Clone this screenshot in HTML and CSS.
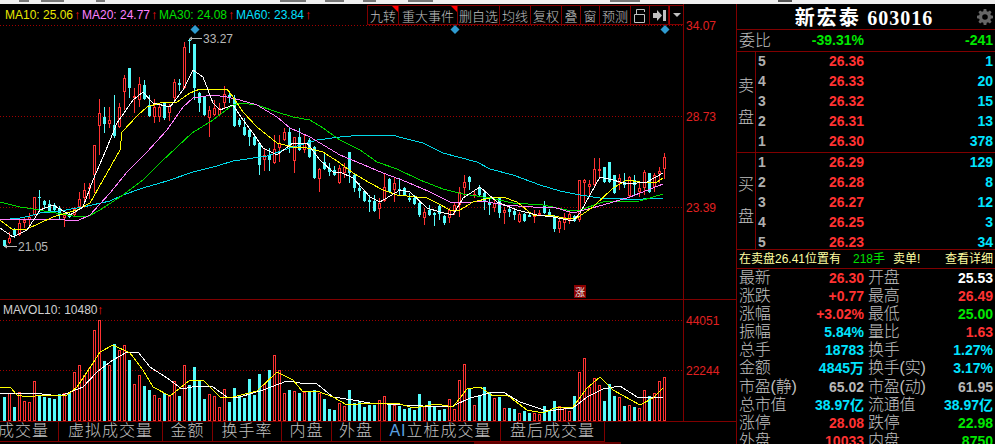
FILE: index.html
```html
<!DOCTYPE html>
<html>
<head>
    <title>新宏泰 603016</title>
    <link rel="stylesheet" href="styles.css">
</head>
<body>
    <div class="top-strip"></div>
    <div class="main">
        <div class="left">
            <div class="chart-head">
                <div class="legend">
                    <span class="c-yellow">MA10: 25.06<i>↑</i></span>
                    <span class="c-pink">MA20: 24.77<i>↑</i></span>
                    <span class="c-green">MA30: 24.08<i>↑</i></span>
                    <span class="c-cyan">MA60: 23.84<i>↑</i></span>
                </div>
                <div class="toolbar">
                    <span class="tool flagged">九转</span>
                    <span class="tool flagged">重大事件</span>
                    <span class="tool">删自选</span>
                    <span class="tool">均线</span>
                    <span class="tool">复权</span>
                    <span class="tool">叠</span>
                    <span class="tool">窗</span>
                    <span class="tool">预测</span>
                    <span class="tool icon">
                        <svg width="12" height="15" viewBox="0 0 12 15"><path d="M2.500 6V1.500h8V4M.5 6.500h10v8H.5z" fill="none" stroke="#c0c0c0" stroke-width="1"/></svg>
                    </span>
                    <span class="tool icon">
                        <svg width="13" height="11" viewBox="0 0 13 11"><path d="M0 3h4V0l5 5.500-5 5.500V8H0z M10 0h3v11h-3z" fill="#c0c0c0"/></svg>
                    </span>
                    <span class="tool drop"><b></b></span>
                </div>
            </div>
            <svg id="chart" class="chart" width="736" height="397" viewBox="0 25 736 397"></svg>
            <div class="tabs">
                <span class="tab first">成交量</span>
                <span class="tab">虚拟成交量</span>
                <span class="tab">金额</span>
                <span class="tab">换手率</span>
                <span class="tab">内盘</span>
                <span class="tab">外盘</span>
                <span class="tab"><em>AI</em>立桩成交量</span>
                <span class="tab">盘后成交量</span>
            </div>
            <div class="tabs-foot"></div>
        </div>

        <div class="panel">
            <div class="title">
                <span class="title-name">新宏泰 <b>603016</b></span>
                <svg class="gear" width="16" height="16" viewBox="0 0 16 16">
                    <path fill="#666" fill-rule="evenodd" d="M6.700 0h2.600l.4 2.200 1.300.6L12.900 1.500l1.700 1.700-1.300 1.900.5 1.200 2.200.4v2.600l-2.200.4-.5 1.200 1.300 1.900-1.700 1.700-1.900-1.300-1.300.5-.4 2.300H6.700l-.4-2.300-1.300-.5-1.900 1.300-1.700-1.700 1.300-1.900-.5-1.200L0 9.300V6.700l2.200-.4.500-1.200-1.300-1.900 1.700-1.700 1.900 1.300 1.300-.6zM8 5.200a2.800 2.800 0 1 0 0 5.600 2.800 2.800 0 0 0 0-5.600z"/>
                </svg>
            </div>
            <div class="ratio">
                <span class="name">委比</span>
                <span class="val1 c-lime">-39.31%</span>
                <span class="val2 c-lime">-241</span>
            </div>
            <div class="book">
                <div class="side">卖<br>盘</div>
                <div class="levels">
                    <div class="level"><span class="no">5</span><span class="price">26.36</span><span class="qty">1</span></div>
                    <div class="level"><span class="no">4</span><span class="price">26.33</span><span class="qty">20</span></div>
                    <div class="level"><span class="no">3</span><span class="price">26.32</span><span class="qty">15</span></div>
                    <div class="level"><span class="no">2</span><span class="price">26.31</span><span class="qty">13</span></div>
                    <div class="level"><span class="no">1</span><span class="price">26.30</span><span class="qty">378</span></div>
                </div>
            </div>
            <div class="book buy">
                <div class="side">买<br>盘</div>
                <div class="levels">
                    <div class="level"><span class="no">1</span><span class="price">26.29</span><span class="qty">129</span></div>
                    <div class="level"><span class="no">2</span><span class="price">26.28</span><span class="qty">8</span></div>
                    <div class="level"><span class="no">3</span><span class="price">26.27</span><span class="qty">12</span></div>
                    <div class="level"><span class="no">4</span><span class="price">26.25</span><span class="qty">3</span></div>
                    <div class="level"><span class="no">5</span><span class="price">26.23</span><span class="qty">34</span></div>
                </div>
            </div>
            <div class="notice">
                <span class="notice-a">在卖盘26.41位置有</span>
                <span class="notice-b">218手</span>
                <span class="notice-c">卖单!</span>
                <span class="notice-d">查看详细</span>
            </div>
            <div class="stats">
                <span class="k">最新</span><span class="v c-red">26.30</span><span class="k">开盘</span><span class="v c-white">25.53</span>
                <span class="k">涨跌</span><span class="v c-red">+0.77</span><span class="k">最高</span><span class="v c-red">26.49</span>
                <span class="k">涨幅</span><span class="v c-red">+3.02%</span><span class="k">最低</span><span class="v c-lime">25.00</span>
                <span class="k">振幅</span><span class="v c-qty">5.84%</span><span class="k">量比</span><span class="v c-red">1.63</span>
                <span class="k">总手</span><span class="v c-qty">18783</span><span class="k">换手</span><span class="v c-qty">1.27%</span>
                <span class="k">金额</span><span class="v c-qty">4845万</span><span class="k">换手(实)</span><span class="v c-qty">3.17%</span>
                <span class="k">市盈(静)</span><span class="v c-gray">65.02</span><span class="k">市盈(动)</span><span class="v c-gray">61.95</span>
                <span class="k">总市值</span><span class="v c-qty">38.97亿</span><span class="k">流通值</span><span class="v c-qty">38.97亿</span>
                <span class="k">涨停</span><span class="v c-red">28.08</span><span class="k">跌停</span><span class="v c-lime">22.98</span>
                <span class="k">外盘</span><span class="v c-red">10033</span><span class="k">内盘</span><span class="v c-lime">8750</span>
            </div>
        </div>
    </div>
    <script src="script.js"></script>
</body>
</html>
```

FILE: styles.css
```css
html, body {
    margin: 0;
    height: 444px;
    overflow: hidden;
    background-color: #000;
}
body {
    font-family: "Liberation Sans", "Noto Sans CJK SC", sans-serif;
    color: #c0c0c0;
}

/* bottom edge of the window toolbar above the quote view */
.top-strip {
    height: 4px;
    background-color: #efefef;
    background-image:
        linear-gradient(90deg,
            transparent 19px, #777 19px, #777 29px, transparent 29px,
            transparent 41px, #777 41px, #777 64px, transparent 64px,
            transparent 96px, #777 96px, #777 105px, transparent 105px,
            transparent 280px, #777 280px, #777 306px, transparent 306px,
            transparent 325px, #777 325px, #777 344px, transparent 344px,
            transparent 363px, #777 363px, #777 376px, transparent 376px,
            transparent 408px, #777 408px, #777 433px, transparent 433px,
            transparent 610px, #777 610px, #777 640px, transparent 640px,
            transparent 778px, #555 778px, #555 792px, transparent 792px);
    background-size: 100% 2px;
    background-repeat: no-repeat;
}
.main {
    display: flex;
    height: 440px;
}
.left {
    width: 736px;
    flex: none;
}

/* header row above the kline area */
.chart-head {
    display: flex;
    height: 21px;
    width: 684px;
    box-sizing: border-box;
    border-right: 1px solid #800000;
    justify-content: space-between;
}
.legend {
    display: flex;
    font-size: 12px;
    line-height: 22px;
    padding-left: 5px;
}
.legend span {
    width: 77px;
    white-space: nowrap;
}
.legend i {
    font-style: normal;
    color: #f01010;
    font-size: 13px;
    margin-left: 1px;
}
.c-yellow { color: #e8e800; }
.c-pink { color: #ff80ff; }
.c-green { color: #00e000; }
.c-cyan { color: #00e0ff; }
.toolbar {
    display: flex;
    box-sizing: border-box;
    height: 20px;
    margin-top: 1px;
    border-left: 1px solid #800000;
    border-top: 1px solid #800000;
    border-bottom: 1px solid #800000;
}
.tool {
    position: relative;
    box-sizing: border-box;
    display: flex;
    align-items: center;
    justify-content: center;
    font-size: 13px;
    font-weight: 300;
    border-right: 1px solid #800000;
    white-space: nowrap;
}
.tool:nth-child(1) { width: 31px; }
.tool:nth-child(2) { width: 59px; }
.tool:nth-child(3) { width: 42px; }
.tool:nth-child(4), .tool:nth-child(5) { width: 31px; }
.tool:nth-child(6), .tool:nth-child(7) { width: 19px; }
.tool:nth-child(8) { width: 31px; }
.tool:nth-child(9), .tool:nth-child(10) { width: 19px; }
.tool:nth-child(11) { width: 14px; border-right: none; border-left: 1px solid #a00000; }
.flagged::after {
    content: "";
    position: absolute;
    top: 0;
    right: 0;
    border-top: 6px solid #ff0000;
    border-left: 6px solid transparent;
}
.drop b {
    display: block;
    border-top: 4px solid #c0c0c0;
    border-left: 4px solid transparent;
    border-right: 4px solid transparent;
}
.chart {
    display: block;
    overflow: visible;
}

/* indicator switch tabs */
.tabs {
    display: flex;
    height: 20px;
    box-sizing: border-box;
    border-top: 1px solid #800000;
    margin-top: -1px;
}
.tab {
    flex: none;
    box-sizing: border-box;
    width: 50px;
    height: 20px;
    border-right: 1px solid #800000;
    border-bottom: 1px solid #800000;
    font-size: 16px;
    font-weight: 300;
    letter-spacing: 1px;
    line-height: 18px;
    text-align: center;
    white-space: nowrap;
}
.tab.first {
    width: 59px;
    margin-left: 0;
    text-align: left;
    text-indent: -2px;
    overflow: hidden;
}
.tab:nth-child(2), .tab:nth-child(8) { width: 104px; }
.tab:nth-child(4) { width: 69px; }
.tab:nth-child(6) { width: 49px; }
.tab:nth-child(7) { width: 120px; }
.tab em {
    font-style: normal;
    color: #5aa0e0;
}
.tabs-foot {
    width: 147px;
    height: 2px;
    margin: 1px 0 0 474px;
    background-color: #600000;
}

/* right hand quote panel */
.panel {
    width: 259px;
    flex: none;
    box-sizing: border-box;
    border-left: 1px solid #800000;
}
.title {
    margin-left: -1px;
    height: 25px;
    color: #fff;
    position: relative;
    display: flex;
    justify-content: center;
    align-items: center;
}
.title-name {
    font-family: "Noto Sans CJK SC", sans-serif;
    font-weight: 700;
    font-size: 20px;
    letter-spacing: 2px;
    margin-right: 3px;
}
.title-name b {
    font-family: "Liberation Serif", serif;
    letter-spacing: 1px;
}
.gear {
    position: absolute;
    right: 2px;
    top: 5px;
}
.ratio {
    display: grid;
    grid-template-columns: 36px 91px 1fr;
    height: 21px;
    line-height: 21px;
    border-top: 1px solid #800000;
    border-bottom: 1px solid #800000;
    align-items: center;
}
.ratio .name {
    padding-left: 2px;
    font-size: 16px;
    font-weight: 300;
}
.val1, .val2, .price, .qty, .no, .v {
    font-weight: 700;
    font-size: 14px;
}
.val1 { text-align: right; }
.val2 { text-align: right; padding-right: 2px; }
.book {
    display: flex;
    height: 100px;
}
.book.buy {
    border-top: 1px solid #800000;
    height: 96px;
}
.side {
    width: 17px;
    flex: none;
    border-right: 1px solid #800000;
    font-size: 16px;
    font-weight: 300;
    line-height: 32px;
    padding-left: 1px;
    box-sizing: content-box;
    margin-right: -1px;
    display: flex;
    align-items: center;
}
.levels {
    flex: 1;
    margin-top: -1px;
}
.level {
    display: grid;
    grid-template-columns: 16px 90px 1fr;
    height: 20px;
    line-height: 20px;
    padding-left: 3px;
}
.no { color: #b0b0b0; }
.price { color: #ff3232; text-align: right; }
.qty { color: #00e4ff; text-align: right; padding-right: 2px; }
.notice {
    display: flex;
    height: 18px;
    line-height: 18px;
    border-top: 1px solid #800000;
    border-bottom: 1px solid #800000;
    font-size: 12px;
    color: #ffffa0;
    white-space: nowrap;
}
.notice-a { margin-left: 2px; width: 114px; }
.notice-b { color: #00e000; width: 40px; }
.notice-c { width: 52px; }
.stats {
    display: grid;
    grid-template-columns: 34px 93px 36px 1fr;
    grid-auto-rows: 18.100px;
    line-height: 18.100px;
    white-space: nowrap;
}
.k {
    font-size: 16px;
    font-weight: 300;
    padding-left: 2px;
    letter-spacing: -.2px;
}
.k:nth-child(4n+3) {
    padding-left: 4px;
}
.v {
    text-align: right;
}
.v:nth-child(4n) {
    padding-right: 2px;
}
.c-red { color: #ff3232; }
.c-lime { color: #00e800; }
.c-qty { color: #00e4ff; }
.c-gray { color: #b8b8b8; }
.c-white { color: #fff; }
```

FILE: script.js
```js
// k line chart: [high, bodyTop, bodyBottom, low, up] in screen y, one row per trading day
const RED = "#ff3232", CYAN = "#54fcfc", GRID = "#800000";

const candles = [
    [240,240,246,247,0],[232,238,243,244,1],[228,230,235,238,0],[218,223,235,236,1],[217,220,223,228,1],
    [213,217,220,227,1],[197,197,215,216,1],[190,197,198,210,0],[200,201,205,208,0],[200,204,212,213,0],
    [203,205,210,211,0],[206,208,215,219,0],[213,215,218,227,1],[212,214,217,218,0],[207,209,215,216,1],
    [192,199,207,208,1],[183,190,198,202,1],[183,187,188,199,1],[145,145,175,193,1],[99,113,126,155,1],
    [107,117,124,133,0],[107,120,124,128,1],[95,125,136,138,0],[103,107,127,128,1],[75,78,92,110,1],
    [68,68,88,98,0],[88,96,98,113,1],[77,84,100,107,1],[80,85,99,100,0],[95,105,116,117,0],
    [99,107,117,123,1],[103,107,117,122,1],[102,103,118,120,0],[104,106,113,121,1],[79,82,98,103,1],
    [79,83,85,91,0],[42,47,88,89,1],[40,40,41,53,0],[44,44,88,100,0],[92,93,103,112,0],
    [96,97,115,116,0],[106,110,118,137,1],[100,108,115,116,1],[103,108,115,116,1],[86,94,103,108,1],
    [93,95,97,103,0],[95,98,126,127,0],[118,120,125,127,0],[118,127,135,136,0],[129,130,137,146,0],
    [136,137,145,146,0],[143,143,165,175,0],[148,155,160,171,1],[148,155,160,171,0],[135,149,163,164,1],
    [135,143,148,162,1],[128,132,140,141,1],[128,132,147,153,0],[137,137,161,173,1],[128,137,150,151,0],
    [135,143,150,153,1],[138,140,157,158,0],[146,147,178,179,0],[168,169,179,192,1],[152,162,169,170,0],
    [163,168,172,176,0],[166,170,175,176,0],[165,168,183,184,1],[163,167,173,178,1],[152,152,173,183,0],
    [174,175,188,192,0],[183,188,191,198,0],[190,191,201,202,0],[195,200,202,212,0],[195,201,211,212,0],
    [198,203,209,219,1],[173,187,201,202,1],[178,179,192,193,0],[178,183,190,202,1],[178,189,191,196,0],
    [187,188,195,196,0],[193,198,200,202,0],[195,198,204,205,0],[202,203,215,217,0],[208,212,218,225,1],
    [205,210,215,216,0],[212,213,215,226,0],[205,206,214,220,0],[215,216,223,225,0],[208,210,218,223,1],
    [202,205,212,215,1],[187,192,205,217,1],[175,182,188,198,1],[176,177,182,190,0],[190,194,196,198,1],
    [185,187,195,196,0],[192,193,202,210,0],[198,202,205,215,0],[197,203,208,212,1],[197,198,213,218,0],
    [207,210,213,224,1],[206,209,212,217,0],[208,211,215,220,0],[212,214,222,223,1],[213,214,221,222,0],
    [213,215,217,217,0],[210,215,217,223,1],[210,213,215,216,1],[201,206,213,214,0],[209,212,215,216,0],
    [215,216,229,232,0],[218,221,229,233,1],[213,217,223,230,1],[212,214,220,224,1],[215,216,221,222,0],
    [180,180,220,222,1],[179,180,183,203,1],[180,184,187,197,1],[158,169,185,186,1],[158,169,171,178,1],
    [167,167,182,183,0],[162,162,182,183,0],[175,175,193,194,0],[174,178,183,190,1],[173,182,185,188,0],
    [176,177,196,197,1],[175,180,185,195,0],[183,188,192,197,1],[170,172,188,195,1],[173,173,192,193,0],
    [173,175,187,192,1],[167,171,174,183,1],[153,157,169,179,1]
];

// volume bars: [top, up], top is three times the distance below y 290
const vols = [
    [320,0],[310,1],[350,0],[305,1],[333,1],[336,1],[273,1],[315,0],[320,0],[323,0],[327,0],[312,0],[310,1],[306,0],
    [246,1],[226,1],[255,1],[234,1],[120,1],[90,1],[213,0],[225,1],[162,0],[180,1],[165,1],[210,0],[282,1],[255,1],
    [288,0],[300,0],[315,1],[325,1],[310,0],[318,1],[273,1],[318,0],[226,1],[285,0],[231,0],[270,0],[327,0],[312,1],
    [318,1],[351,1],[297,1],[336,0],[294,0],[318,0],[323,0],[267,0],[315,0],[252,0],[282,1],[240,0],[195,1],[240,1],
    [309,1],[300,0],[303,1],[309,0],[305,1],[305,0],[300,0],[308,1],[327,0],[357,0],[360,0],[340,1],[347,1],[300,0],
    [339,0],[333,0],[351,0],[345,0],[345,0],[330,1],[318,1],[338,0],[345,1],[348,0],[357,0],[353,0],[360,0],[312,0],
    [347,1],[333,0],[351,0],[360,0],[357,0],[327,1],[357,1],[270,1],[222,1],[294,0],[345,1],[315,0],[291,0],[306,0],
    [324,1],[321,0],[354,1],[354,0],[357,0],[369,1],[363,0],[369,0],[369,1],[372,1],[348,0],[363,0],[333,0],[348,1],
    [354,1],[363,1],[318,0],[246,1],[204,1],[291,1],[264,1],[285,1],[333,0],[282,0],[318,0],[321,1],[348,0],[345,1],
    [351,0],[354,1],[300,1],[318,0],[309,1],[273,1],[261,1]
];

const lines = {
    "#00d8e8": [[0,220],[10,219],[20,218],[30,216],[40,213],[60,211],[83,207],[110,201],[123,195],[143,188],[167,181],[193,172],[217,166],[233,161],[267,156],[290,148],[317,140],[340,137],[362,135],[392,135],[403,138],[423,143],[443,153],[477,162],[490,169],[513,175],[540,185],[560,191],[580,195],[600,198],[623,199],[643,199],[663,198]],
    "#00d800": [[0,202],[20,207],[33,209],[50,212],[73,216],[87,217],[100,210],[123,195],[143,180],[160,163],[177,147],[192,133],[213,120],[233,105],[240,103],[257,105],[277,112],[293,117],[310,120],[323,128],[340,140],[360,150],[377,162],[397,169],[420,180],[443,189],[463,194],[490,198],[513,203],[543,205],[567,210],[580,210],[603,202],[640,201],[663,194]],
    "#ff80ff": [[0,220],[20,219],[53,219],[77,221],[90,215],[110,193],[127,172],[147,152],[167,130],[183,107],[193,98],[213,95],[227,97],[240,100],[257,105],[277,117],[290,128],[310,137],[340,155],[357,162],[383,173],[407,182],[430,192],[450,202],[463,203],[483,201],[503,205],[533,207],[553,207],[573,213],[603,205],[630,197],[663,184]],
    "#ffff00": [[0,220],[13,230],[27,229],[53,217],[77,210],[90,203],[107,173],[120,150],[122,132],[138,115],[147,107],[160,103],[177,102],[190,93],[200,89],[227,89],[233,97],[243,112],[257,127],[277,143],[293,147],[307,148],[323,152],[340,163],[353,173],[370,183],[383,190],[397,195],[427,198],[437,203],[450,210],[460,210],[473,202],[490,198],[503,197],[517,202],[533,215],[550,215],[563,218],[577,218],[593,207],[613,188],[627,180],[640,182],[657,182],[663,178]],
    "#ffffff": [[0,228],[13,237],[27,230],[40,210],[53,205],[70,215],[83,207],[93,180],[106,150],[117,123],[133,100],[143,92],[153,103],[170,107],[183,90],[193,70],[203,77],[213,103],[220,110],[233,105],[243,120],[253,133],[263,148],[277,155],[293,143],[307,143],[320,160],[333,172],[340,172],[353,178],[370,197],[380,202],[400,190],[410,192],[427,208],[440,212],[453,215],[463,198],[480,187],[497,202],[517,210],[537,215],[553,217],[573,221],[580,213],[600,177],[613,180],[627,184],[647,182],[663,173]]
};

const volLines = {
    "#ffffff": [[0,393],[33,393],[60,396],[83,387],[97,372],[113,360],[127,352],[138,352],[150,367],[167,378],[182,389],[197,386],[213,387],[227,397],[240,397],[263,390],[287,381],[300,383],[317,384],[333,397],[353,400],[370,403],[403,405],[423,406],[453,406],[470,398],[490,393],[503,392],[520,402],[547,411],[573,408],[587,397],[603,389],[620,386],[637,397],[663,397]],
    "#ffff00": [[0,388],[10,387],[17,395],[27,397],[43,395],[67,395],[77,387],[93,363],[100,352],[113,345],[130,353],[143,370],[153,387],[170,396],[190,380],[203,380],[220,397],[233,397],[257,391],[277,372],[293,380],[303,392],[317,391],[333,397],[347,405],[370,403],[397,403],[413,408],[437,404],[453,407],[467,389],[480,387],[493,396],[507,395],[527,410],[543,413],[557,407],[573,407],[587,388],[600,377],[613,390],[640,405],[653,398],[663,388]]
};

const svg = document.getElementById("chart");
const NS = "http://www.w3.org/2000/svg";

function add(name, attrs, text) {
    const el = document.createElementNS(NS, name);
    for (const key in attrs) el.setAttribute(key, attrs[key]);
    if (text) el.textContent = text;
    svg.appendChild(el);
    return el;
}

function crisp(x1, y1, x2, y2, stroke, extra) {
    return add("line", Object.assign({ x1, y1, x2, y2, stroke, "shape-rendering": "crispEdges" }, extra));
}

function poly(points, stroke) {
    add("polyline", {
        points: points.map(p => p.join(",")).join(" "),
        fill: "none",
        stroke,
        "shape-rendering": "crispEdges"
    });
}

// grid lines
const dots = { "stroke-dasharray": "1 2" };
[25.5, 116.5, 207.5, 320.5, 370.5].forEach(y => crisp(0, y, 683, y, "#a00000", dots));
crisp(0, 299.5, 736, 299.5, GRID);
crisp(683.5, 25, 683.5, 421, GRID);

// axis labels
[[34.07, 30], [28.73, 120.5], [23.39, 211.5]].forEach(([v, y]) => {
    add("text", { x: 686, y, fill: "#e02020", "font-size": 12 }, v.toFixed(2));
});
[[44051, 324.5], [22244, 374.5]].forEach(([v, y]) => {
    add("text", { x: 686, y, fill: "#e02020", "font-size": 12 }, String(v));
});

// candles
candles.forEach((c, i) => {
    const x = 5 * (i + 1) - 1;
    const [high, top, bottom, low, up] = c;
    const color = up ? RED : CYAN;
    crisp(x + 0.5, high, x + 0.5, low, color);
    if (up) {
        add("rect", { x: x - 0.5, y: top + 0.5, width: 2, height: Math.max(bottom - top - 1, 1), fill: "#000", stroke: RED, "shape-rendering": "crispEdges" });
    } else {
        add("rect", { x: x - 1, y: top, width: 3, height: Math.max(bottom - top, 1), fill: CYAN, "shape-rendering": "crispEdges" });
    }
});

// volume bars
vols.forEach((v, i) => {
    const x = 5 * (i + 1) - 1;
    const top = Math.round(290 + v[0] / 3);
    if (v[1]) {
        add("rect", { x: x - 0.5, y: top + 0.5, width: 2, height: 421 - top - 1, fill: "#000", stroke: RED, "shape-rendering": "crispEdges" });
    } else {
        add("rect", { x: x - 1, y: top, width: 3, height: 421 - top, fill: CYAN, "shape-rendering": "crispEdges" });
    }
});

for (const color in lines) poly(lines[color], color);
for (const color in volLines) poly(volLines[color], color);

// high and low markers
const LABEL = "#b8b8b8";
crisp(190, 38.5, 202, 38.5, LABEL);
add("path", { d: "M189 38.500l3-2v4z", fill: LABEL });
crisp(189.5, 39, 189.5, 52, CYAN);
add("text", { x: 203, y: 43, fill: LABEL, "font-size": 12 }, "33.27");
crisp(5, 246.5, 17, 246.5, LABEL);
add("path", { d: "M4 246.500l3-2v4z", fill: LABEL });
add("text", { x: 18, y: 250.5, fill: LABEL, "font-size": 12 }, "21.05");

// event diamonds
[195, 455, 665].forEach(x => add("path", { d: `M${x} 25l4.500 4.500-4.500 4.500-4.500-4.500z`, fill: "#2f9bd0" }));

// volume caption
add("text", { x: 3, y: 314, fill: "#d0d0d0", "font-size": 12 }, "MAVOL10: 10480");
add("text", { x: 97, y: 314, fill: "#f01010", "font-size": 13 }, "↑");

// limit up tag
add("rect", { x: 574, y: 285, width: 12, height: 13, fill: "#8b0000" });
add("text", { x: 575, y: 296, fill: "#e0e0e0", "font-size": 10 }, "涨");
```
